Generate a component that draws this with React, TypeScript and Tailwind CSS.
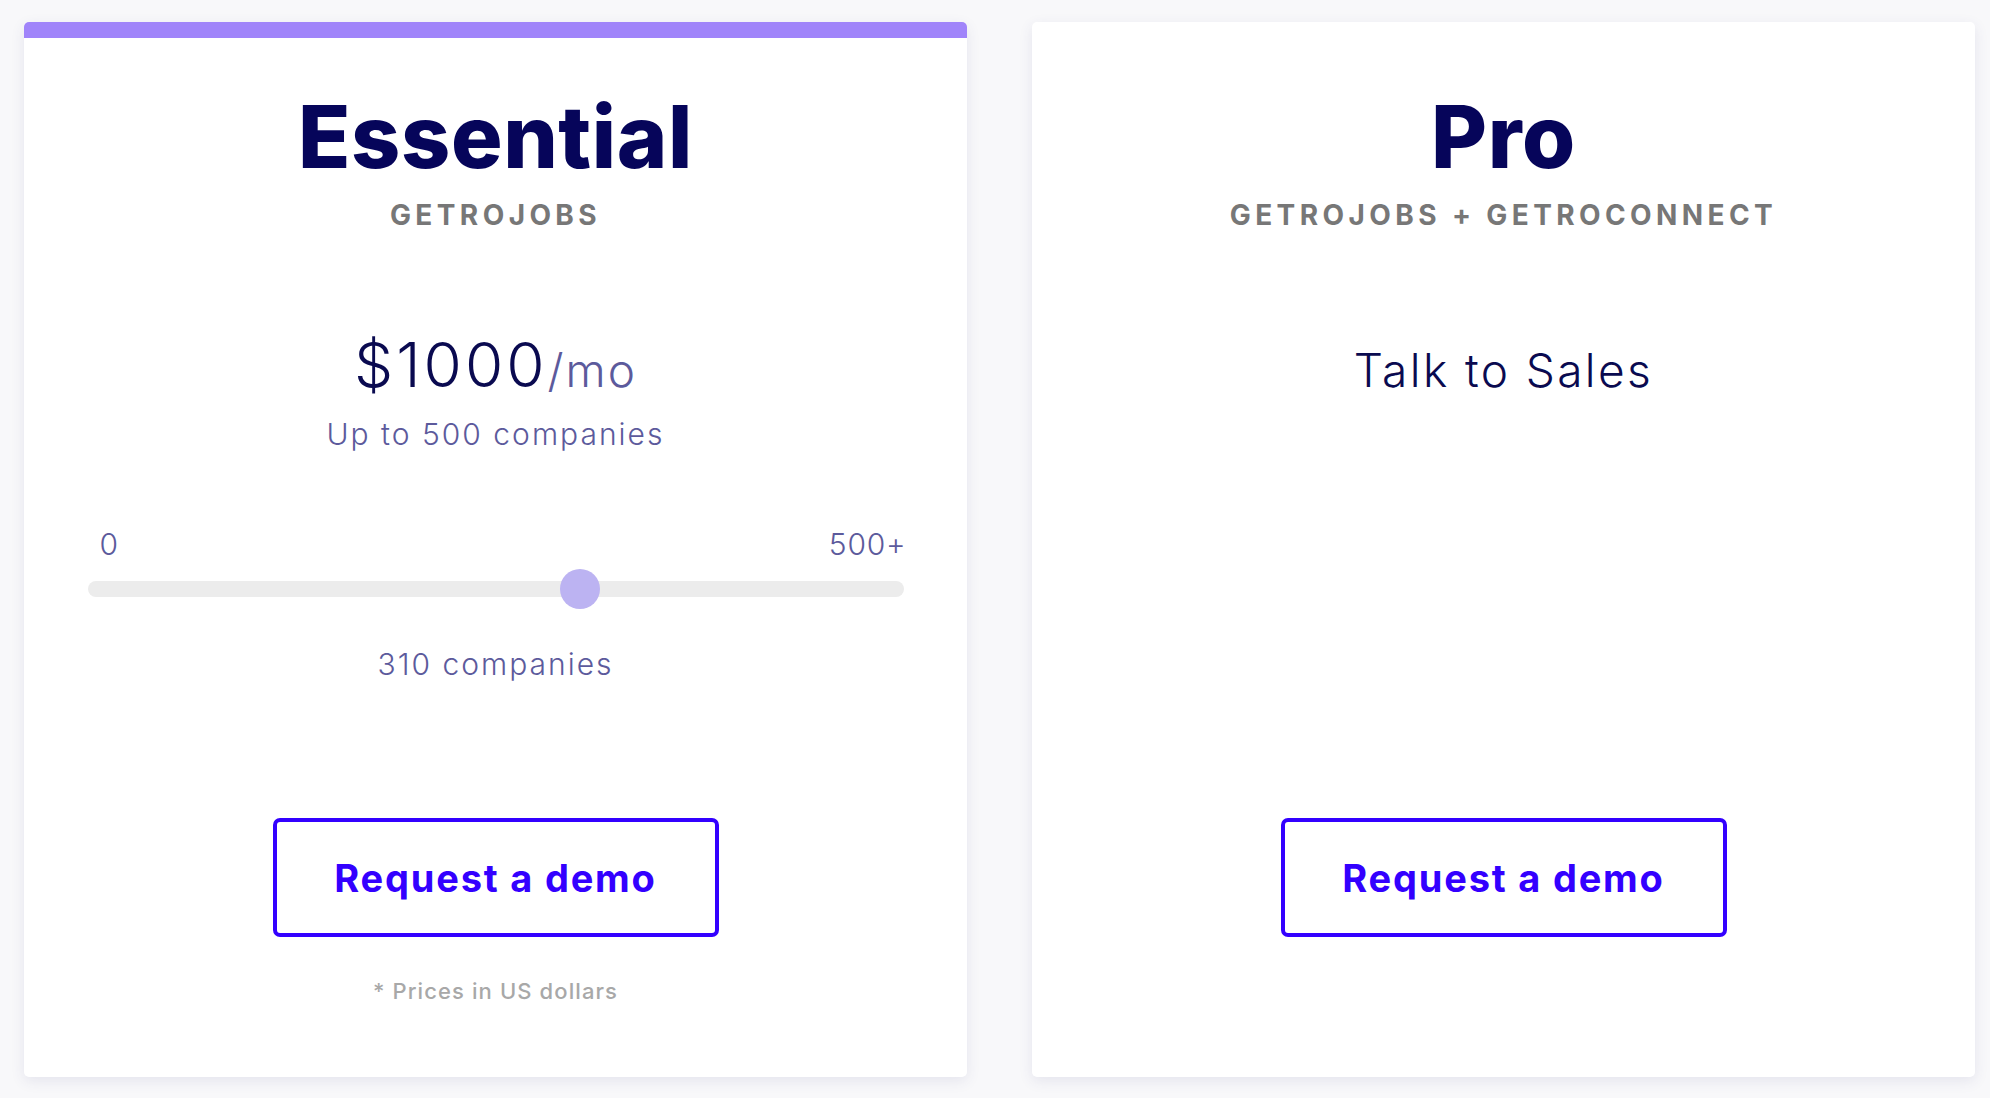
import React from "react";

const font = { fontFamily: "Inter, 'Noto Sans', sans-serif" };

function DemoButton() {
  return (
    <button className="w-[446px] h-[119px] border-4 border-[#3300ff] rounded-[7px] bg-white text-[#3300ff] text-[38px] font-bold leading-none tracking-[1.8px]">
      Request a demo
    </button>
  );
}

export default function App() {
  return (
    <div className="min-h-screen w-full bg-[#f8f8fa] pl-[24px] pt-[22px] flex gap-[65px]" style={font}>
      {/* Essential */}
      <div className="w-[943px] h-[1055px] bg-white rounded-[5px] shadow-[0_4px_14px_rgba(60,60,130,0.10)] flex flex-col items-center">
        <div className="w-full h-[16px] bg-[#a084fa] rounded-t-[5px]" />
        <h2 className="mt-[56px] text-[86px] font-extrabold leading-none text-[#06055a] tracking-[0.6px]">Essential</h2>
        <div className="mt-[21px] text-[28px] font-bold leading-none text-[#777777] tracking-[4.4px]">GETROJOBS</div>
        <div className="mt-[105px] leading-none flex items-baseline">
          <span className="text-[62px] font-light text-[#0a0a50] tracking-[3px]">$1000</span>
          <span className="text-[46px] font-light text-[#5c5a9c] tracking-[2px]">/mo</span>
        </div>
        <div className="mt-[23px] text-[30px] font-light leading-none text-[#5c5a9c] tracking-[2px]">Up to 500 companies</div>
        <div className="mt-[80px] w-[816px]">
          <div className="flex justify-between pl-[12px] -mr-[3px] text-[30px] font-light leading-none text-[#5c5a9c] tracking-[0.8px]">
            <span>0</span>
            <span>500+</span>
          </div>
          <div className="relative mt-[10px] h-[40px] flex items-center">
            <div className="w-full h-[16px] rounded-full bg-[#ececec]" />
            <div className="absolute left-[472px] top-0 w-[40px] h-[40px] rounded-full bg-[#bcb3f2]" />
          </div>
        </div>
        <div className="mt-[40px] text-[30px] font-light leading-none text-[#5c5a9c] tracking-[2px]">310 companies</div>
        <div className="flex-1" />
        <DemoButton />
        <div className="h-[140px] w-full flex flex-col items-center">
          <div className="mt-[43px] text-[22px] font-medium leading-none text-[#a8a8a8] tracking-[1.1px]">* Prices in US dollars</div>
        </div>
      </div>

      {/* Pro */}
      <div className="w-[943px] h-[1055px] bg-white rounded-[5px] shadow-[0_4px_14px_rgba(60,60,130,0.10)] flex flex-col items-center">
        <div className="w-full h-[16px]" />
        <h2 className="mt-[56px] text-[86px] font-extrabold leading-none text-[#06055a] tracking-[0.6px]">Pro</h2>
        <div className="mt-[21px] text-[28px] font-bold leading-none text-[#777777] tracking-[4.4px]">GETROJOBS + GETROCONNECT</div>
        <div className="mt-[118px] text-[46px] font-light leading-none text-[#0a0a50] tracking-[2.4px]">Talk to Sales</div>
        <div className="flex-1" />
        <DemoButton />
        <div className="h-[140px] w-full" />
      </div>
    </div>
  );
}
